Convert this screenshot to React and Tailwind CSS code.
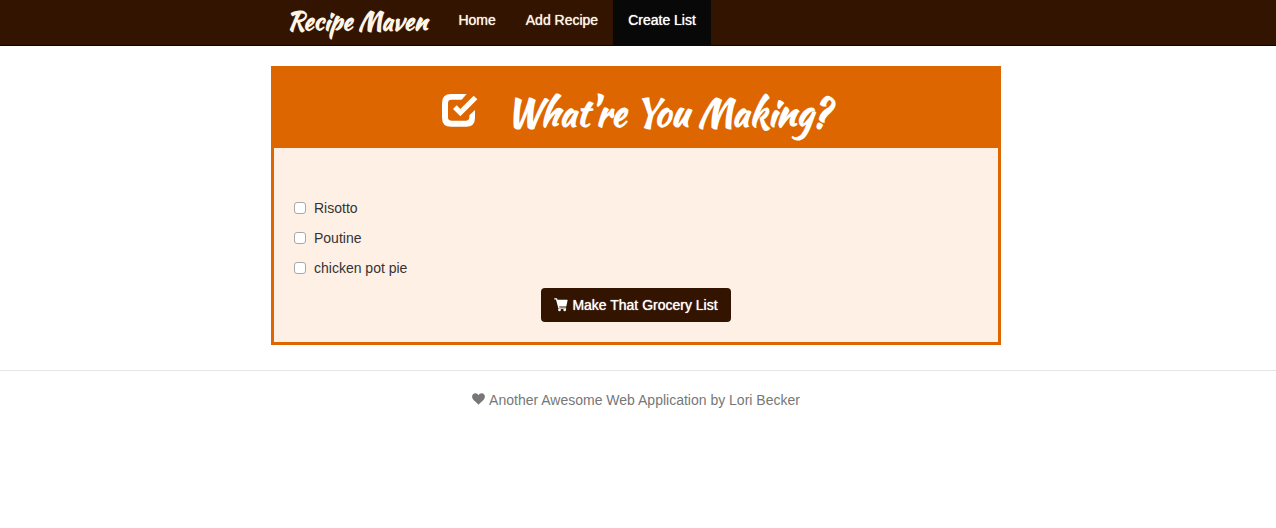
import React from "react";

const scriptFont = "font-['Kaushan_Script','Lato',cursive]";

const links = [
  { label: "Home", active: false },
  { label: "Add Recipe", active: false },
  { label: "Create List", active: true },
];

const recipes = ["Risotto", "Poutine", "chicken pot pie"];

function CheckIcon() {
  return (
    <svg aria-hidden="true" viewBox="38 42 108 99" className="mb-0.5 h-[33px] w-9 shrink-0" fill="currentColor">
      <path d="M112 42 L97 59 H66 Q56 59 56 69 V112 Q56 122 66 122 H110 Q120 122 120 112 V106 L137 90 V113 Q137 140 110 140 H65 Q38 140 38 113 V69 Q38 42 65 42 Z" />
      <path d="M71 87 L82 76 L93 87 L133 47 L144 58 L93 109 Z" />
    </svg>
  );
}

function CartIcon() {
  return (
    <svg aria-hidden="true" viewBox="0 0 14 14" className="size-3.5 shrink-0" fill="currentColor">
      <path d="M.6.2 H2.6 Q3 .2 3.1.6 L3.5 1.8 H13.2 Q13.7 1.8 13.6 2.3 L12.4 7.9 Q12.3 8.4 11.8 8.4 H5.1 L5.5 9.6 H11.7 Q12.2 9.6 12.2 10.2 T11.7 10.8 H4.9 Q4.5 10.8 4.4 10.4 L2 1.4 H.6 Q.1 1.4 .1 .8 T.6.2Z" />
      <path d="M4.2 11 H6.8 V12 Q6.8 13.3 5.5 13.3 T4.2 12Z M9.4 11 H12 V12 Q12 13.3 10.7 13.3 T9.4 12Z" />
    </svg>
  );
}

function HeartIcon() {
  return (
    <svg aria-hidden="true" viewBox="0 0 13 12" className="mb-0.5 h-3 w-[13px] shrink-0" fill="currentColor">
      <path d="M6.5 11.8 Q5.8 10.7 3.2 8.4 C1 6.5 .1 5.2 .1 3.4 C.1 1.6 1.5 .2 3.3 .2 C4.8 .2 5.9 .9 6.5 2.2 C7.1 .9 8.2 .2 9.7 .2 C11.5 .2 12.9 1.6 12.9 3.4 C12.9 5.2 12 6.5 9.8 8.4 Q7.2 10.7 6.5 11.8Z" />
    </svg>
  );
}

export default function App() {
  return (
    <div className="min-h-screen bg-white font-['Liberation_Sans',Arial,sans-serif] text-sm leading-5 text-[#333333]">
      <header className="border-b border-[#080808] bg-[#331400] pr-1">
        <nav className="mx-auto flex max-w-[730px] flex-wrap items-stretch">
          <a href="#home" className={`${scriptFont} flex items-center px-4 pb-1 text-[25px] font-bold leading-10 text-[#fff5e6]`}>
            Recipe Maven
          </a>
          {links.map(({ label, active }) => (
            <a
              key={label}
              href="#page"
              aria-current={active ? "page" : undefined}
              className={`px-[15px] pb-[15px] pt-2.5 [text-shadow:0_0_1px_currentColor] ${active ? "bg-[#080808] text-white" : "text-[#fff5e6]"}`}
            >
              {label}
            </a>
          ))}
        </nav>
      </header>

      <main className="pr-1 pt-5">
        <section className="mx-auto max-w-[730px] border-[3px] border-[#dd6600] bg-[#fff0e6]">
          <div className="flex items-center justify-center gap-7 bg-[#dd6600] pb-[11px] pt-4 text-white">
            <CheckIcon />
            <h1 className={`${scriptFont} pt-1 text-[37px] font-bold leading-12`}>What're You Making?</h1>
          </div>
          <form className="px-5 pb-5 pt-[50px]" onSubmit={(event) => event.preventDefault()}>
            <div className="flex flex-col items-start gap-2.5">
              {recipes.map((name) => (
                <label key={name} className="flex items-center gap-2">
                  <input
                    type="checkbox"
                    name="recipe"
                    value={name}
                    className="size-3 appearance-none rounded-[3px] border border-[#a9a9a9] bg-white checked:bg-[#331400]"
                  />
                  {name}
                </label>
              ))}
            </div>
            <div className="flex justify-center pt-2.5">
              <button
                type="submit"
                className="flex items-center gap-1 rounded bg-[#331400] px-[13px] py-[7px] text-white [text-shadow:0_0_1px_currentColor]"
              >
                <CartIcon />
                Make That Grocery List
              </button>
            </div>
          </form>
        </section>
      </main>

      <footer className="mt-[25px] border-t border-[#e5e5e5] pr-1 pt-[19px] text-[#777777]">
        <p className="flex items-center justify-center gap-1">
          <HeartIcon />
          Another Awesome Web Application by Lori Becker
        </p>
      </footer>
    </div>
  );
}
